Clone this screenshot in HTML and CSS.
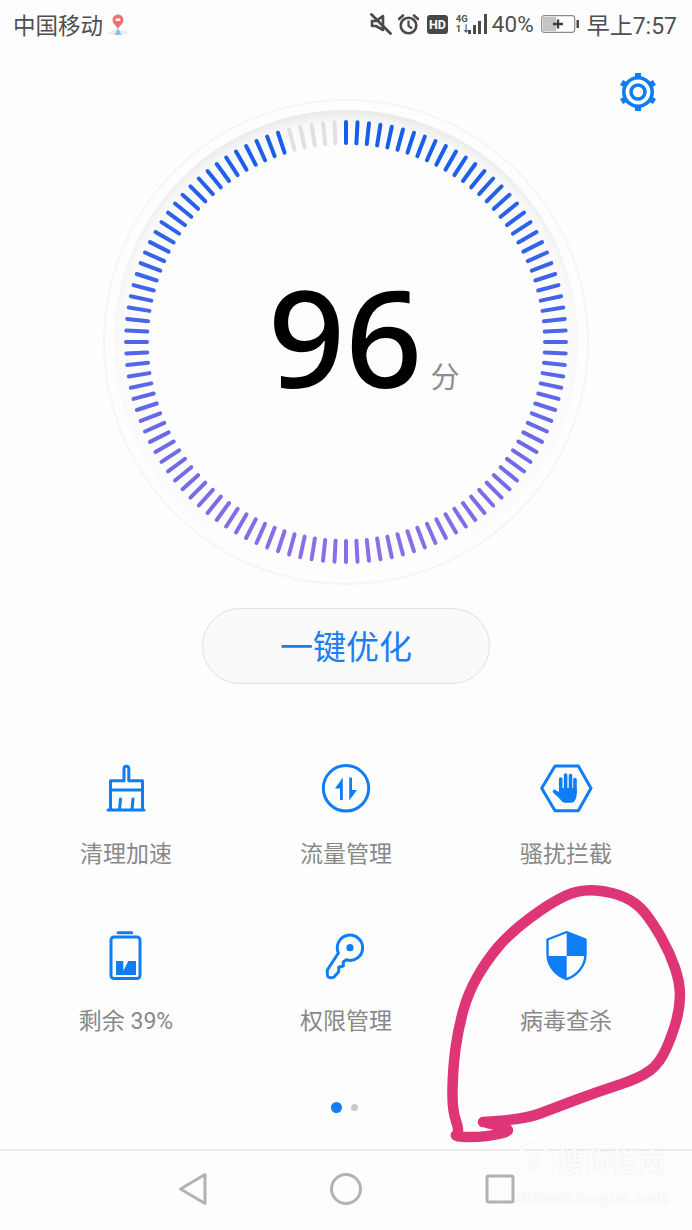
FILE: index.html
```html
<!DOCTYPE html>
<html lang="zh-CN">
<head>
    <meta charset="utf-8">
    <title>手机管家</title>
    <link rel="stylesheet" href="styles.css">
</head>
<body>
<div class="screen">
    <header class="status">
        <div class="status-left">
            <span class="carrier">中国移动</span>
            <svg class="pin" width="24" height="24" viewBox="0 0 24 24">
                <path d="M1 21 L8 18 L16 18 L23 21 L16 23 H8Z" fill="#e4eff4"/>
                <path d="M8.5 23 L12 16 L15.5 23Z" fill="#8fbcf0"/>
                <path d="M12 16.5 C9 13 6.5 11 6.5 8 A5.5 5.5 0 0 1 17.5 8 C17.5 11 15 13 12 16.5Z" fill="#f0716c"/>
                <rect x="9.5" y="6.5" width="5" height="2.5" rx="1" fill="#fff"/>
            </svg>
        </div>
        <div class="status-right">
            <svg class="st-mute" width="22" height="22" viewBox="0 0 22 22">
                <path d="M2 8 H6 L13 3 V17 L6 13 H2Z" fill="none" stroke="#4a4a4a" stroke-width="2.6" stroke-linejoin="round"/>
                <path d="M1.5 1.5 L20.5 20.5" stroke="#4a4a4a" stroke-width="2.8" stroke-linecap="round"/>
            </svg>
            <svg class="st-alarm" width="21" height="21" viewBox="0 0 21 21">
                <circle cx="10.5" cy="11.5" r="7.8" fill="none" stroke="#4a4a4a" stroke-width="2.6"/>
                <path d="M10.5 6.5 V12 L14 14.5" fill="none" stroke="#4a4a4a" stroke-width="2.2"/>
                <path d="M1 5 L5 1.5 M20 5 L16 1.5" stroke="#4a4a4a" stroke-width="2.6" stroke-linecap="round"/>
            </svg>
            <span class="st-hd">HD</span>
            <span class="st-net"><b>4G</b><b>1↓</b></span>
            <svg class="st-signal" width="21" height="22" viewBox="0 0 21 22">
                <rect x="0" y="17" width="3" height="4" fill="#4a4a4a"/>
                <rect x="5" y="12" width="3" height="9" fill="#4a4a4a"/>
                <rect x="10" y="8" width="3" height="13" fill="#4a4a4a"/>
                <rect x="16" y="1" width="3" height="20" fill="#4a4a4a"/>
            </svg>
            <span class="st-pct">40%</span>
            <svg class="st-batt" width="38" height="20" viewBox="0 0 38 20">
                <rect x="0.7" y="1.7" width="33" height="16.6" rx="2.5" fill="#fff" stroke="#8a8a8a" stroke-width="1.2"/>
                <rect x="2" y="3" width="13" height="14" fill="#c4c4c4"/>
                <path d="M12 10 H22 M17 5.5 V14.5" stroke="#3c3c3c" stroke-width="2.4"/>
                <rect x="35.5" y="6" width="2.5" height="8" fill="#4a4a4a"/>
            </svg>
            <span class="st-time">早上7:57</span>
        </div>
    </header>

    <section class="gauge">
        <svg id="dial" class="dial" width="692" height="544" viewBox="0 0 692 544">
            <defs>
                <radialGradient id="band" gradientUnits="userSpaceOnUse" cx="346" cy="306" r="244">
                    <stop offset="0.88" stop-color="#fdfdfd"/>
                    <stop offset="0.95" stop-color="#f8f8f8"/>
                    <stop offset="1" stop-color="#e9e9e9"/>
                </radialGradient>
            </defs>
            <circle cx="346" cy="294" r="242" fill="none" stroke="#f5f5f5" stroke-width="2"/>
            <circle cx="346" cy="294" r="232" fill="url(#band)"/>
        </svg>
        <svg class="gear" width="44" height="44" viewBox="0 0 44 44">
            <g stroke="#0f7cf2" stroke-width="6">
                <path d="M22 3 V9"/>
                <path d="M22 35 V41"/>
                <path d="M5.5 12.5 L10.7 15.5"/>
                <path d="M33.3 28.5 L38.5 31.5"/>
                <path d="M5.5 31.5 L10.7 28.5"/>
                <path d="M33.3 15.5 L38.5 12.5"/>
            </g>
            <circle cx="22" cy="22" r="14.2" fill="#fff" stroke="#0f7cf2" stroke-width="3.6"/>
            <circle cx="22" cy="22" r="7" fill="#fff" stroke="#0f7cf2" stroke-width="3.6"/>
        </svg>
        <div class="score"><span class="score-num">96</span><span class="score-unit">分</span></div>
    </section>

    <div class="action"><button class="optimize">一键优化</button></div>

    <main class="tools">
        <div class="tool">
            <svg class="ico" width="56" height="56" viewBox="0 0 56 56">
                <path d="M12.5 48 V18.7 H26 V7 Q26 4.3 28.4 4.3 Q30.8 4.3 30.8 7 V18.7 H44.5 V48 M10 48 H46 M12.5 28 H44.5 M22.5 37 L21.5 48 M35 37 L34 48"/>
            </svg>
            <span class="tool-name">清理加速</span>
        </div>
        <div class="tool">
            <svg class="ico" width="56" height="56" viewBox="0 0 56 56">
                <circle cx="28" cy="26.3" r="22.7"/>
                <path class="solid" d="M22 38 V26.5 H17 L24.8 15.5 V38Z M31.2 15.5 V38.5 L39 28 H34 V15.5Z"/>
            </svg>
            <span class="tool-name">流量管理</span>
        </div>
        <div class="tool">
            <svg class="ico" width="56" height="56" viewBox="0 0 56 56">
                <path d="M3.7 26.3 L17 4 H40.3 L53 26.3 L40.3 48.7 H17Z"/>
                <path class="finger" d="M22.7 17 V28 M27.6 13 V28 M32.5 13.5 V28 M37 17.5 V30"/>
                <path class="solid" d="M21 26 H38.8 V32 Q38 40.7 33 40.7 H27 Q24 40.7 22 37 L15 30.5 Q14 28 16.5 27.5 L21 30Z"/>
            </svg>
            <span class="tool-name">骚扰拦截</span>
        </div>
        <div class="tool">
            <svg class="ico" width="56" height="56" viewBox="0 0 56 56">
                <path d="M20 3.7 H33.7"/>
                <rect x="13" y="8" width="29" height="41.5" rx="3"/>
                <path class="solid" d="M18 32 H25.3 V41.7 L30.3 32 H38 V46 H18Z"/>
            </svg>
            <span class="tool-name">剩余 39%</span>
        </div>
        <div class="tool">
            <svg class="ico" width="56" height="56" viewBox="0 0 56 56">
                <path d="M20.4 24 A12.7 12.7 0 1 1 28 30.8 L25.3 33 V37 L20.7 38.3 V42.7 L16 48 Q13 49.5 10.3 48 Q9 47 9.3 44 V41Z"/>
                <circle class="solid" cx="32" cy="18.7" r="3.6"/>
            </svg>
            <span class="tool-name">权限管理</span>
        </div>
        <div class="tool">
            <svg class="ico" width="56" height="56" viewBox="0 0 56 56">
                <path class="thin" d="M28.7 3 L47.5 10.5 V25 C47.5 38 38 47 28.7 50 C19 47 9.5 38 9.5 25 V10.5Z"/>
                <path class="solid" d="M28.7 3 L47.5 10.5 V27 H28.7Z M9.5 27 H28.7 V50 C19 47 10 38 9.5 27Z"/>
            </svg>
            <span class="tool-name">病毒查杀</span>
        </div>
    </main>

    <div class="dots"><i class="dot dot-on"></i><i class="dot"></i></div>

    <nav class="nav">
        <svg width="36" height="36" viewBox="0 0 36 36">
            <path d="M31 3.5 V32.5 L6.5 18Z"/>
        </svg>
        <svg width="36" height="36" viewBox="0 0 36 36">
            <circle cx="18" cy="18" r="14.5"/>
        </svg>
        <svg width="36" height="36" viewBox="0 0 36 36">
            <rect x="5" y="5" width="26" height="26" rx="1.5"/>
        </svg>
    </nav>

    <svg id="scribble" class="scribble" width="692" height="1230" viewBox="0 0 692 1230"></svg>

    <div class="mark">
        <div class="mark-top"><span class="mark-s">S</span><span class="mark-name">搜狗指南</span></div>
        <div class="mark-url">zhinan.sogou.com</div>
    </div>
</div>
<script src="gauge.js"></script>
</body>
</html>
```
FILE: styles.css
```css
html, body { margin: 0; padding: 0; background: #fdfdfd; }
body { font-family: Roboto, "Noto Sans CJK SC", sans-serif; }

.screen {
    position: relative;
    width: 692px;
    height: 1230px;
    overflow: hidden;
    background: #fdfdfd;
}

/* status bar */
.status {
    display: flex;
    justify-content: space-between;
    align-items: center;
    height: 48px;
    padding: 0 15px 0 13px;
    color: #4f4f4f;
    font-size: 22.5px;
}
.status-left, .status-right { display: flex; align-items: center; }
.pin { margin-left: 3px; }
.st-mute { margin-right: 6px; }
.st-alarm { margin-right: 8px; }
.st-hd {
    width: 21px;
    height: 19px;
    margin-right: 8px;
    border-radius: 3px;
    background: #484848;
    color: #fff;
    font-size: 12.5px;
    font-weight: 700;
    line-height: 19px;
    text-align: center;
}
.st-net {
    display: flex;
    flex-direction: column;
    width: 12px;
    font-size: 9.5px;
    line-height: 10px;
}
.st-signal { margin-right: 3px; }
.st-pct { margin-right: 7px; }
.st-batt { margin-right: 8px; }
.st-time { font-size: 23px; }

/* score dial */
.gauge { position: relative; height: 544px; }
.dial { display: block; }
.gear { position: absolute; top: 22px; left: 616px; }
.score {
    position: absolute;
    top: 188px;
    left: 268px;
    display: flex;
    align-items: baseline;
}
.score-num {
    color: #000;
    font-family: "Noto Sans", sans-serif;
    font-size: 135px;
    font-weight: 500;
    line-height: 200px;
}
.score-unit {
    margin-left: 8px;
    color: #8e8e8e;
    font-size: 29px;
    line-height: 29px;
}

.action { display: flex; justify-content: center; margin-top: 16px; }
.optimize {
    width: 288px;
    height: 76px;
    padding-bottom: 3px;
    border: 1px solid #e0e0e0;
    border-radius: 38px;
    background: #fafafa;
    color: #1a7ff0;
    font-family: inherit;
    font-size: 33px;
}

/* tools */
.tools {
    display: grid;
    grid-template-columns: repeat(3, 220px);
    row-gap: 59px;
    justify-content: center;
    margin-top: 78px;
}
.tool { display: flex; flex-direction: column; align-items: center; }
.tool-name {
    margin-top: 22px;
    color: #888;
    font-size: 23px;
    line-height: 30px;
}
.ico { display: block; }
.ico path, .ico circle, .ico rect {
    fill: none;
    stroke: #0f7ef4;
    stroke-width: 3;
    stroke-linecap: round;
    stroke-linejoin: round;
}
.ico .solid { fill: #0f7ef4; stroke: none; }
.ico .finger { stroke-width: 3.6; }
.ico .thin { stroke-width: 2.4; }

.dots {
    display: flex;
    justify-content: center;
    align-items: center;
    gap: 9px;
    height: 12px;
    margin-top: 64px;
    padding-right: 4px;
}
.dot { width: 7px; height: 7px; border-radius: 50%; background: #c9c9c9; }
.dot-on { width: 11px; height: 11px; background: #0f7ef4; }

/* bottom nav */
.nav {
    position: absolute;
    left: 0;
    right: 0;
    bottom: 0;
    display: flex;
    justify-content: center;
    gap: 118px;
    height: 81px;
    padding-top: 20px;
    box-sizing: border-box;
    border-top: 2px solid #ececec;
}
.nav path, .nav circle, .nav rect {
    fill: none;
    stroke: #b2b2b2;
    stroke-width: 3;
    stroke-linejoin: round;
}

/* pen annotation */
.scribble { position: absolute; top: 0; left: 0; pointer-events: none; }
.scribble path {
    fill: none;
    stroke: #de3577;
    stroke-width: 10.5;
    stroke-linecap: round;
    stroke-linejoin: round;
}

/* watermark */
.mark {
    position: absolute;
    top: 1144px;
    left: 515px;
    color: rgba(255, 255, 255, 0.9);
    text-shadow: 0 0 2px rgba(0, 0, 0, 0.1);
}
.mark-top { display: flex; align-items: center; gap: 4px; }
.mark-s {
    width: 34px;
    height: 34px;
    border: 2px solid rgba(255, 255, 255, 0.9);
    border-radius: 50%;
    box-shadow: 0 0 2px rgba(0, 0, 0, 0.1);
    font-size: 24px;
    font-weight: 700;
    line-height: 34px;
    text-align: center;
}
.mark-name { font-size: 27px; font-weight: 700; line-height: 36px; }
.mark-url { margin-top: 7px; font-size: 17.5px; font-weight: 700; letter-spacing: 0.6px; line-height: 18px; }
```
FILE: gauge.js
```js
// ticks round the dial: 120 of them, the last 5 still unscored
var NS = "http://www.w3.org/2000/svg";
var dial = document.getElementById("dial");
var TICKS = 120, GREY = 5, CX = 346, CY = 294;

function mix(a, b, t) {
    return Math.round(a + (b - a) * t);
}

for (var i = 0; i < TICKS; i++) {
    var ang = i * 2 * Math.PI / TICKS;
    var s = Math.sin(ang), c = Math.cos(ang);
    var line = document.createElementNS(NS, "line");
    line.setAttribute("x1", CX + 220 * s);
    line.setAttribute("y1", CY - 220 * c);
    line.setAttribute("x2", CX + 199 * s);
    line.setAttribute("y2", CY - 199 * c);
    line.setAttribute("stroke-width", 4);
    line.setAttribute("stroke-linecap", "round");
    var t = (1 - c) / 2;
    if (i >= TICKS - GREY) {
        line.setAttribute("stroke", "#e0e0e0");
    } else {
        line.setAttribute("stroke", "rgb(" + mix(20, 138, t) + "," + mix(94, 110, t) + "," + mix(236, 232, t) + ")");
    }
    dial.appendChild(line);
}

// hand-drawn ring, smoothed through the midpoints
var pts = [[483,1122],[523,1120],[557,1107],[597,1092],[640,1078],[660,1063],[673,1033],[680,1007],
    [680,983],[670,953],[653,923],[637,903],[613,892],[580,889],[550,903],[510,933],[487,960],[468,993],
    [458,1030],[453,1067],[452,1110],[460,1132],[453,1137],[487,1137],[515,1130],[487,1123]];
var d = "M" + pts[0][0] + " " + pts[0][1];
for (var j = 1; j < pts.length - 1; j++) {
    var mx = (pts[j][0] + pts[j + 1][0]) / 2, my = (pts[j][1] + pts[j + 1][1]) / 2;
    d += " Q" + pts[j][0] + " " + pts[j][1] + " " + mx + " " + my;
}
d += " L" + pts[pts.length - 1][0] + " " + pts[pts.length - 1][1];
var ring = document.createElementNS(NS, "path");
ring.setAttribute("d", d);
document.getElementById("scribble").appendChild(ring);
```
